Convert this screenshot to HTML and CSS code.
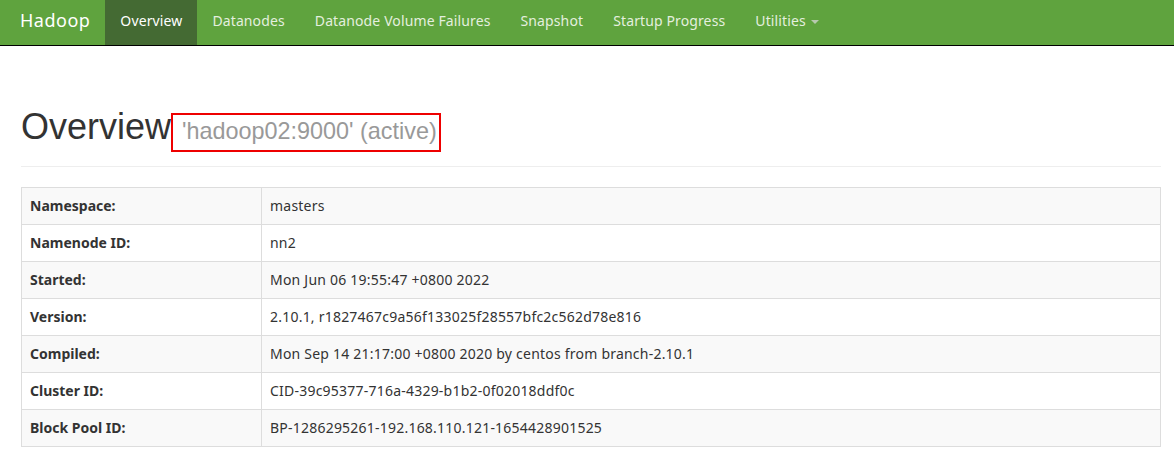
FILE: index.html
```html
<!DOCTYPE html>
<html>
<head>
<meta charset="utf-8">
<title>Namenode information</title>
<link rel="stylesheet" href="styles.css">
</head>
<body>
<header class="navbar">
  <a class="brand" href="#">Hadoop</a>
  <ul class="nav">
    <li class="active"><a href="#">Overview</a></li>
    <li><a href="#">Datanodes</a></li>
    <li><a href="#">Datanode Volume Failures</a></li>
    <li><a href="#">Snapshot</a></li>
    <li><a href="#">Startup Progress</a></li>
    <li><a href="#">Utilities <span class="caret"></span></a></li>
  </ul>
</header>
<main class="container">
  <div class="page-header">
    <h1>Overview<span class="annot"><small>'hadoop02:9000' (active)</small></span></h1>
  </div>
  <table class="info">
    <tr><th>Namespace:</th><td>masters</td></tr>
    <tr><th>Namenode ID:</th><td>nn2</td></tr>
    <tr><th>Started:</th><td>Mon Jun 06 19:55:47 +0800 2022</td></tr>
    <tr><th>Version:</th><td>2.10.1, r1827467c9a56f133025f28557bfc2c562d78e816</td></tr>
    <tr><th>Compiled:</th><td>Mon Sep 14 21:17:00 +0800 2020 by centos from branch-2.10.1</td></tr>
    <tr><th>Cluster ID:</th><td>CID-39c95377-716a-4329-b1b2-0f02018ddf0c</td></tr>
    <tr><th>Block Pool ID:</th><td>BP-1286295261-192.168.110.121-1654428901525</td></tr>
  </table>
</main>
</body>
</html>
```
FILE: styles.css
```css
* { box-sizing: border-box; }
body {
  margin: 0;
  font-family: "Noto Sans", "Open Sans", sans-serif;
  font-size: 14px;
  line-height: 20px;
  color: #333;
  background: #fff;
}
.navbar {
  display: flex;
  align-items: stretch;
  height: 46px;
  padding-left: 5px;
  background: #5fa33e;
  border-bottom: 1px solid #000;
}
.brand {
  display: block;
  padding: 9px 15px 0;
  font-size: 18px;
  line-height: 22px;
  letter-spacing: 0.5px;
  color: #fff;
  text-decoration: none;
}
.nav {
  display: flex;
  margin: 0;
  padding: 0;
  list-style: none;
}
.nav li a {
  display: block;
  height: 45px;
  padding: 10px 15px;
  line-height: 21px;
  letter-spacing: 0.12px;
  color: #e4efdf;
  text-decoration: none;
}
.nav li.active a {
  background: #446a33;
  color: #fff;
}
.caret {
  display: inline-block;
  width: 0;
  height: 0;
  margin-left: 1px;
  vertical-align: middle;
  border-top: 4px solid #b7c9ae;
  border-left: 4px solid transparent;
  border-right: 4px solid transparent;
}
.container {
  padding: 0 13px 0 21px;
}
.page-header {
  margin: 61px 0 20px;
  padding-bottom: 9px;
  border-bottom: 1px solid #eee;
}
h1 {
  margin: 20px 0 10px;
  font-family: "Liberation Sans", Arial, sans-serif;
  font-size: 36px;
  font-weight: 400;
  line-height: 1.1;
  color: #333;
}
.annot {
  font-size: 23.4px;
  padding: 3px 2px 6px 9px;
  border: 2px solid #ee0000;
}
.annot small {
  font-size: 23.4px;
  color: #999;
}
.info {
  width: 1140px;
  border-collapse: collapse;
  border: 1px solid #ddd;
}
.info th,
.info td {
  padding: 8px;
  border: 1px solid #ddd;
  line-height: 20px;
  text-align: left;
  vertical-align: top;
}
.info td {
  letter-spacing: 0.22px;
}
.info th {
  width: 240px;
  font-weight: 700;
}
.info tr:nth-child(odd) {
  background: #f9f9f9;
}
```
